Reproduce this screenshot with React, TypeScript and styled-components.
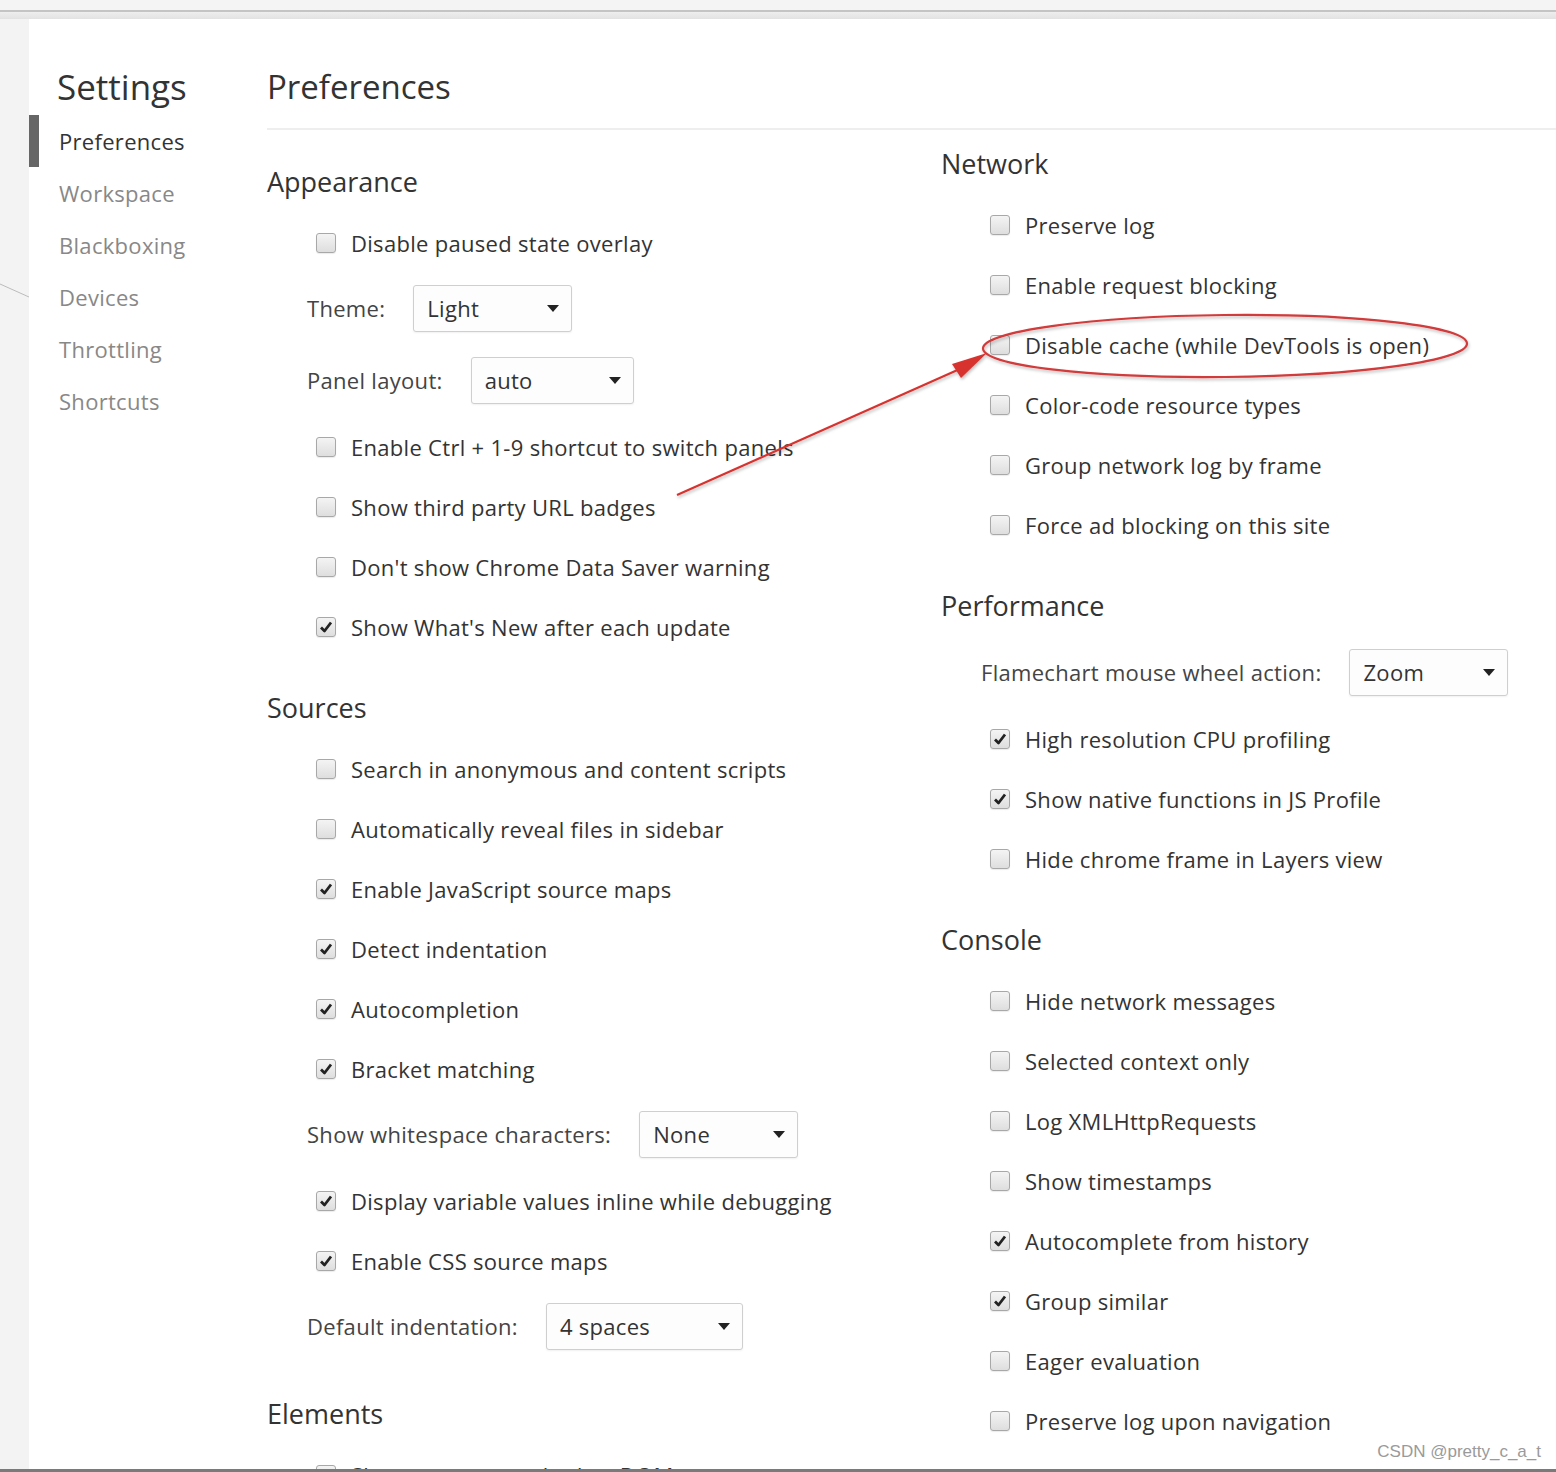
import React from "react";
import styled, { createGlobalStyle } from "styled-components";

const GlobalStyle = createGlobalStyle`
  html, body {
    margin: 0;
    padding: 0;
    overflow: hidden;
    background: #f3f3f3;
  }
  * {
    box-sizing: border-box;
  }
`;

const Frame = styled.div`
  position: relative;
  height: 1472px;
  display: flex;
  flex-direction: column;
  overflow: hidden;
  border-bottom: 3px solid #7a7a7a;
  font-family: "Segoe UI", "Open Sans", "Noto Sans", sans-serif;
  color: #333;
`;

const TopBar = styled.div`
  flex: none;
  height: 12px;
  background: #f4f4f4;
  border-bottom: 2px solid #c4c4c4;
`;

const Band = styled.div`
  flex: none;
  height: 7px;
  background: linear-gradient(#eeeeee, #e2e2e2);
`;

const Body = styled.div`
  flex: 1;
  display: flex;
  min-height: 0;
`;

const Gutter = styled.div`
  flex: none;
  width: 29px;
  background: #f3f3f3;
`;

const Panel = styled.div`
  flex: 1;
  display: flex;
  background: #fff;
  min-width: 0;
`;

const Sidebar = styled.nav`
  flex: none;
  width: 238px;
`;

const SidebarTitle = styled.h1`
  margin: 0 0 5px;
  padding: 45px 0 0 28px;
  font-size: 35px;
  line-height: 46px;
  font-weight: 400;
  color: #333;
`;

const NavItem = styled.div<{ $active?: boolean }>`
  height: 52px;
  display: flex;
  align-items: center;
  padding-left: 20px;
  border-left: 10px solid ${(p) => (p.$active ? "#666" : "transparent")};
  font-size: 22px;
  letter-spacing: 0.3px;
  color: ${(p) => (p.$active ? "#333" : "#888")};
`;

const Main = styled.main`
  flex: 1;
  min-width: 0;
`;

const Header = styled.h2`
  margin: 0;
  padding: 45px 0 18px;
  font-size: 33px;
  line-height: 46px;
  font-weight: 400;
  color: #333;
  border-bottom: 2px solid #eee;
`;

const Columns = styled.div`
  display: grid;
  grid-template-columns: 674px 1fr;
`;

const Column = styled.div<{ $pad: number }>`
  padding-top: ${(p) => p.$pad}px;
`;

const Section = styled.section`
  &:not(:first-child) {
    margin-top: 20px;
  }
`;

const SectionTitle = styled.h3`
  margin: 0;
  height: 62px;
  display: flex;
  align-items: center;
  font-size: 27px;
  font-weight: 400;
  color: #333;
`;

const CheckRow = styled.label`
  height: 60px;
  display: flex;
  align-items: center;
  gap: 15px;
  padding-left: 49px;
  padding-top: 1px;
  font-size: 22px;
  letter-spacing: 0.3px;
  color: #333;
  white-space: nowrap;
`;

const Box = styled.span<{ $checked?: boolean }>`
  flex: none;
  width: 20px;
  height: 20px;
  border: 1px solid #a8a8a8;
  border-radius: 3px;
  background: linear-gradient(#f4f4f4, #dedede);
  display: flex;
  align-items: center;
  justify-content: center;
  box-shadow: 0 1px 1px rgba(0, 0, 0, 0.08);
`;

const SelectRow = styled.div`
  height: 72px;
  display: flex;
  align-items: center;
  gap: 28px;
  padding-left: 40px;
  font-size: 22px;
  letter-spacing: 0.3px;
  color: #444;
  white-space: nowrap;
`;

const Select = styled.div<{ $width: number }>`
  width: ${(p) => p.$width}px;
  height: 47px;
  display: flex;
  align-items: center;
  justify-content: space-between;
  padding: 0 12px 0 13px;
  border: 1px solid #cfcfcf;
  border-radius: 3px;
  background: #fdfdfd;
  box-shadow: 0 1px 2px rgba(0, 0, 0, 0.06);
  color: #333;
`;

const Caret = styled.span`
  width: 0;
  height: 0;
  border-left: 6px solid transparent;
  border-right: 6px solid transparent;
  border-top: 7px solid #222;
`;

const Watermark = styled.div`
  position: absolute;
  right: 15px;
  bottom: 7px;
  font-family: "Liberation Sans", Arial, sans-serif;
  font-size: 17px;
  color: #9a9a9a;
`;

const Overlay = styled.svg`
  position: absolute;
  left: 0;
  top: 0;
  pointer-events: none;
`;

type Item =
  | { kind: "check"; label: string; checked?: boolean }
  | { kind: "select"; label: string; value: string; width: number };

interface SectionData {
  title: string;
  items: Item[];
}

const c = (label: string, checked = false): Item => ({ kind: "check", label, checked });
const s = (label: string, value: string, width: number): Item => ({ kind: "select", label, value, width });

const LEFT: SectionData[] = [
  {
    title: "Appearance",
    items: [
      c("Disable paused state overlay"),
      s("Theme:", "Light", 159),
      s("Panel layout:", "auto", 163),
      c("Enable Ctrl + 1-9 shortcut to switch panels"),
      c("Show third party URL badges"),
      c("Don't show Chrome Data Saver warning"),
      c("Show What's New after each update", true),
    ],
  },
  {
    title: "Sources",
    items: [
      c("Search in anonymous and content scripts"),
      c("Automatically reveal files in sidebar"),
      c("Enable JavaScript source maps", true),
      c("Detect indentation", true),
      c("Autocompletion", true),
      c("Bracket matching", true),
      s("Show whitespace characters:", "None", 159),
      c("Display variable values inline while debugging", true),
      c("Enable CSS source maps", true),
      s("Default indentation:", "4 spaces", 197),
    ],
  },
  {
    title: "Elements",
    items: [c("Show user agent shadow DOM"), c("Word wrap", true)],
  },
];

const RIGHT: SectionData[] = [
  {
    title: "Network",
    items: [
      c("Preserve log"),
      c("Enable request blocking"),
      c("Disable cache (while DevTools is open)"),
      c("Color-code resource types"),
      c("Group network log by frame"),
      c("Force ad blocking on this site"),
    ],
  },
  {
    title: "Performance",
    items: [
      s("Flamechart mouse wheel action:", "Zoom", 159),
      c("High resolution CPU profiling", true),
      c("Show native functions in JS Profile", true),
      c("Hide chrome frame in Layers view"),
    ],
  },
  {
    title: "Console",
    items: [
      c("Hide network messages"),
      c("Selected context only"),
      c("Log XMLHttpRequests"),
      c("Show timestamps"),
      c("Autocomplete from history", true),
      c("Group similar", true),
      c("Eager evaluation"),
      c("Preserve log upon navigation"),
      c("Enable custom formatters"),
    ],
  },
];

const NAV = ["Preferences", "Workspace", "Blackboxing", "Devices", "Throttling", "Shortcuts"];

const Check = () => (
  <svg width="14" height="14" viewBox="0 0 14 14">
    <path d="M2 7.5 L5.5 11 L12 2.5" fill="none" stroke="#222" strokeWidth="2.8" strokeLinejoin="round" />
  </svg>
);

const renderItem = (item: Item, index: number) =>
  item.kind === "check" ? (
    <CheckRow key={index}>
      <Box $checked={item.checked}>{item.checked && <Check />}</Box>
      {item.label}
    </CheckRow>
  ) : (
    <SelectRow key={index}>
      {item.label}
      <Select $width={item.width}>
        {item.value}
        <Caret />
      </Select>
    </SelectRow>
  );

const renderSections = (sections: SectionData[]) =>
  sections.map(({ title, items }) => (
    <Section key={title}>
      <SectionTitle>{title}</SectionTitle>
      {items.map(renderItem)}
    </Section>
  ));

const App: React.FC = () => (
  <>
    <GlobalStyle />
    <Frame>
      <TopBar />
      <Band />
      <Body>
        <Gutter />
        <Panel>
          <Sidebar>
            <SidebarTitle>Settings</SidebarTitle>
            {NAV.map((name, i) => (
              <NavItem key={name} $active={i === 0}>
                {name}
              </NavItem>
            ))}
          </Sidebar>
          <Main>
            <Header>Preferences</Header>
            <Columns>
              <Column $pad={20}>{renderSections(LEFT)}</Column>
              <Column $pad={2}>{renderSections(RIGHT)}</Column>
            </Columns>
          </Main>
        </Panel>
      </Body>
      <Watermark>CSDN @pretty_c_a_t</Watermark>
      <Overlay width="1556" height="1472" viewBox="0 0 1556 1472">
        <defs>
          <filter id="sh" x="-10%" y="-50%" width="120%" height="200%">
            <feDropShadow dx="1" dy="2" stdDeviation="1.5" floodColor="#000" floodOpacity="0.25" />
          </filter>
        </defs>
        <line x1="0" y1="284" x2="29" y2="297" stroke="#bbb" strokeWidth="1" />
        <g filter="url(#sh)">
          <ellipse cx="1225" cy="346" rx="242" ry="31" fill="none" stroke="#d23a3a" strokeWidth="2.2" transform="rotate(-0.6 1225 346)" />
          <line x1="677" y1="495" x2="962" y2="368" stroke="#d8322f" strokeWidth="2.2" />
          <polygon points="987,353 952,364 961,378" fill="#d8322f" />
        </g>
      </Overlay>
    </Frame>
  </>
);

export default App;
